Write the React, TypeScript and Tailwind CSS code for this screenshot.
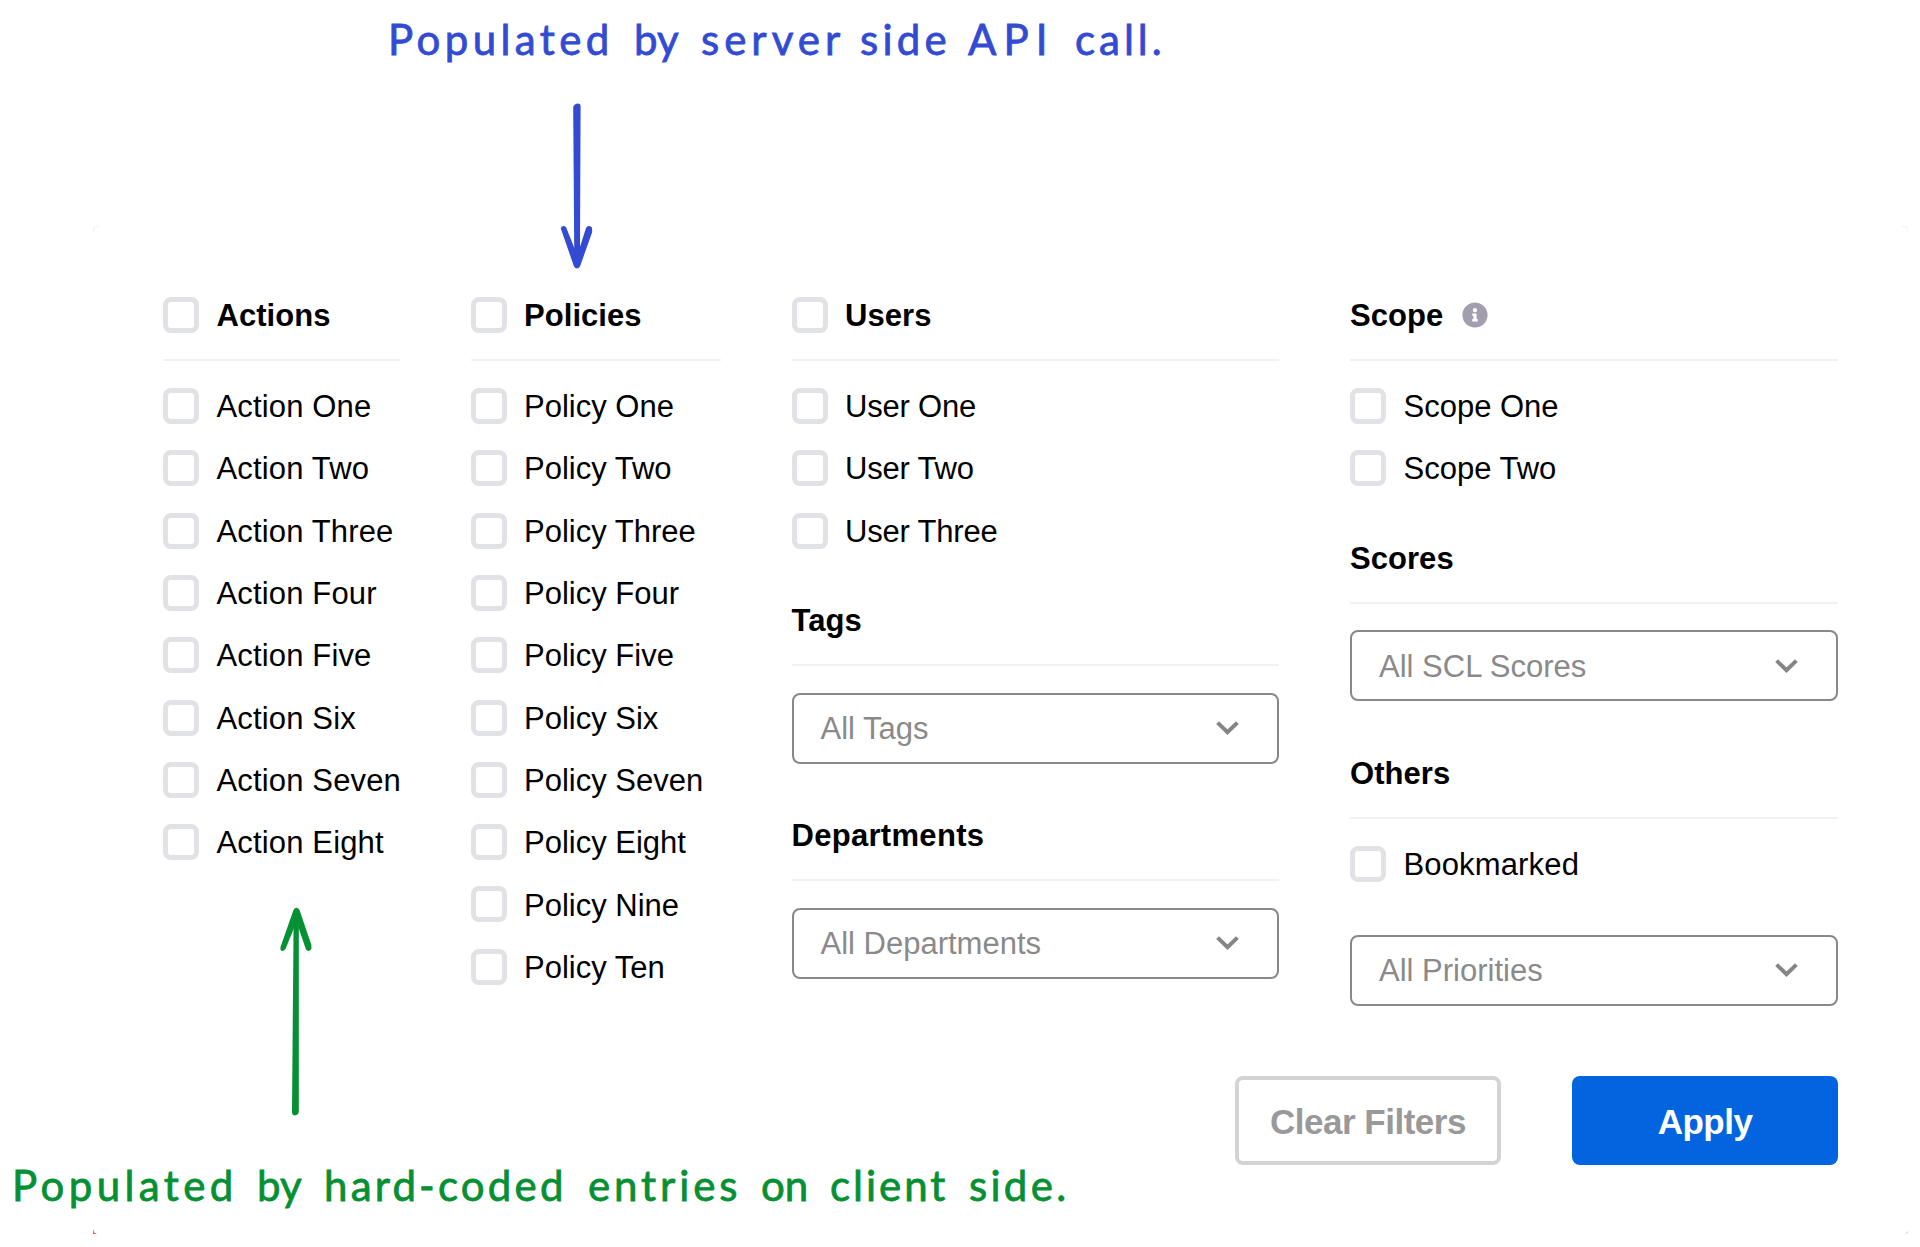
import type { ReactNode } from "react";
import { FaInfoCircle } from "react-icons/fa";

const actions = ["One", "Two", "Three", "Four", "Five", "Six", "Seven", "Eight"];
const policies = [...actions, "Nine", "Ten"];

function Checkbox() {
  return <span className="size-9 shrink-0 rounded-lg border-5 border-[#e1e2e6] bg-white" />;
}

function Heading({ children, checkbox = false }: { children: ReactNode; checkbox?: boolean }) {
  return (
    <div className="mb-[26.7px] flex h-[64.4px] items-start border-b-2 border-[#f1f1f2]">
      <div className="flex h-9 items-center gap-[17.5px] text-[31px] font-bold tracking-[0.05px]">
        {checkbox && <Checkbox />}
        {children}
      </div>
    </div>
  );
}

function Option({ label }: { label: string }) {
  return (
    <label className="flex h-9 items-center gap-[17.5px] whitespace-nowrap text-[31px]">
      <Checkbox />
      <span className="pt-[2.6px]">{label}</span>
    </label>
  );
}

function Options({ items }: { items: string[] }) {
  return (
    <div className="flex flex-col gap-[26.3px]">
      {items.map((item) => (
        <Option key={item} label={item} />
      ))}
    </div>
  );
}

function Select({ label }: { label: string }) {
  return (
    <button className="flex h-[71px] w-full items-center justify-between rounded-lg border-2 border-[#888] pr-[38px] pl-[27px] text-[31px] tracking-[0px] text-[#8a8a8a]">
      <span className="pt-[2.6px]">{label}</span>
      <svg className="h-[14px] w-[23px]" viewBox="0 0 23 14" fill="none" stroke="#858585" strokeWidth="4">
        <path d="M1.6 1.6 11.5 11.2 21.4 1.6" />
      </svg>
    </button>
  );
}

type Word = { text: string; className: string };

function Note({ words, className }: { words: Word[]; className: string }) {
  return (
    <p className={`absolute flex h-12 items-center whitespace-nowrap font-[Lato,sans-serif] text-[42px] leading-[48px] [-webkit-text-stroke:0.8px_currentColor] ${className}`}>
      {words.map((word, i) => (
        <span key={i} className={`shrink-0 ${word.className}`}>
          {word.text}{" "}
        </span>
      ))}
    </p>
  );
}

const serverNote: Word[] = [
  { text: "Populated", className: "w-[246px] tracking-[4.4px]" },
  { text: "by", className: "w-[67px] tracking-[0px]" },
  { text: "server", className: "w-[159px] tracking-[5px]" },
  { text: "side", className: "w-[108px] tracking-[4.2px]" },
  { text: "API", className: "w-[107px] tracking-[7px]" },
  { text: "call.", className: "w-[90px] tracking-[4px]" },
];

const clientNote: Word[] = [
  { text: "Populated", className: "w-[245px] tracking-[4.4px]" },
  { text: "by", className: "w-[67px] tracking-[0px]" },
  { text: "hard-coded", className: "w-[264px] tracking-[3.2px]" },
  { text: "entries", className: "w-[173px] tracking-[3.9px]" },
  { text: "on", className: "w-[69px] tracking-[0px]" },
  { text: "client", className: "w-[139px] tracking-[3px]" },
  { text: "side.", className: "w-[97px] tracking-[3.3px]" },
];

export default function App() {
  return (
    <div className="relative h-[1247px] w-[1920px] overflow-hidden bg-white font-['Liberation_Sans',Arial,sans-serif] text-black">
      <main className="pt-[297px] pl-[163px]">
        <div className="flex h-[779px] items-start gap-[71px]">
          <section className="w-[236.5px] tracking-[0.15px]">
            <Heading checkbox>
              <span className="pt-0.5">Actions</span>
            </Heading>
            <Options items={actions.map((n) => `Action ${n}`)} />
          </section>
          <section className="w-[250px]">
            <Heading checkbox>
              <span className="pt-0.5">Policies</span>
            </Heading>
            <Options items={policies.map((n) => `Policy ${n}`)} />
          </section>
          <section className="flex w-[487.5px] flex-col gap-[53px] tracking-[-0.2px]">
            <div>
              <Heading checkbox>
                <span className="pt-0.5">Users</span>
              </Heading>
              <Options items={["User One", "User Two", "User Three"]} />
            </div>
            <div>
              <Heading>
                <span className="pt-[3.5px]">Tags</span>
              </Heading>
              <Select label="All Tags" />
            </div>
            <div>
              <Heading>
                <span className="pt-0.5 tracking-[0.3px]">Departments</span>
              </Heading>
              <Select label="All Departments" />
            </div>
          </section>
          <section className="flex w-[488px] flex-col gap-[53px]">
            <div>
              <Heading>
                <span className="pt-0.5">Scope</span>
                <FaInfoCircle className="ml-[1.5px] size-[26px] text-[#a29eae]" />
              </Heading>
              <Options items={["Scope One", "Scope Two"]} />
            </div>
            <div>
              <Heading>
                <span className="pt-[3.5px]">Scores</span>
              </Heading>
              <Select label="All SCL Scores" />
            </div>
            <div>
              <Heading>
                <span className="pt-[3px]">Others</span>
              </Heading>
              <div className="flex flex-col gap-[53px] tracking-[0.15px]">
                <Option label="Bookmarked" />
                <Select label="All Priorities" />
              </div>
            </div>
          </section>
        </div>
        <div className="flex w-[1675px] justify-end gap-[71px] text-[35px] font-bold tracking-[-0.5px]">
          <button className="h-[89px] w-[266px] rounded-lg border-4 border-[#d3d3d3] pt-1 text-[#999]">Clear Filters</button>
          <button className="h-[89px] w-[266px] rounded-lg bg-[#0265df] pt-1 text-white">Apply</button>
        </div>
      </main>

      <Note words={serverNote} className="top-[15px] left-[388px] text-[#334bd2]" />
      <svg className="absolute top-[100px] left-[555px] h-[172px] w-[44px]" viewBox="0 0 44 172" fill="#334bd2">
        <path d="M18.2 7Q18.8 4.5 22 3.6Q25.4 3.4 25.6 6L25 148H19.2Z" />
        <path d="M5.8 128.500Q7 124.500 11 127L19.300 148H24.600L31 128Q33 124.500 37 127.500L37.200 132L25 166.500Q22 170.500 19 166.500Z" />
      </svg>

      <Note words={clientNote} className="top-[1161px] left-[12px] text-[#059033]" />
      <svg className="absolute top-[904px] left-[274px] h-[216px] w-[44px]" viewBox="0 0 44 216" fill="#059033">
        <path d="M19.6 18 22.5 6 24.8 18V208Q24.5 211 20.5 211.5Q18 211 18 208Z" />
        <path d="M6.5 43 19.500 6Q22.300 1.500 25.500 6L37.4 41V45Q34.500 48.500 32 45.500L24.600 24L22.300 20L20 24L11.500 45Q8.500 48.500 6.500 46Z" />
      </svg>

      <span className="absolute top-[226px] left-[93px] size-1.5 rounded-tl-sm border-t border-l border-[#f3f3f3]" />
      <span className="absolute top-[226px] left-[1902px] size-1.5 rounded-tr-sm border-t border-r border-[#f3f3f3]" />
      <svg className="absolute top-[1229px] left-[93px] size-[5px]" viewBox="0 0 5 5" fill="#f0605f">
        <path d="M0 0 1.2 3.4 4 5H0Z" />
      </svg>
      <svg className="absolute top-[1231px] left-[1905px] size-[3px]" viewBox="0 0 3 3" fill="#cfcfcf">
        <path d="M3 0V2L0 3Z" />
      </svg>
    </div>
  );
}
